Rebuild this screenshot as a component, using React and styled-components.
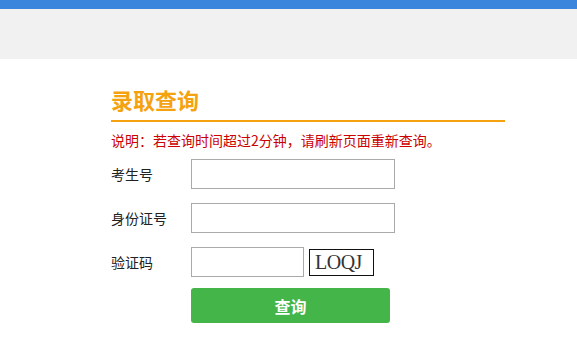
import React from 'react';
import styled, { createGlobalStyle } from 'styled-components';

const GlobalStyle = createGlobalStyle`
  html, body {
    margin: 0;
    padding: 0;
    background: #fff;
    font-family: "Noto Sans CJK SC", "Noto Sans", sans-serif;
  }
`;

const TopBar = styled.div`
  height: 9px;
  background-color: #3c85dd;
`;

const Banner = styled.div`
  height: 50px;
  background-color: #f1f1f1;
`;

const Main = styled.div`
  width: 394px;
  margin-left: 111px;
  padding-top: 25px;
`;

const Title = styled.h2`
  margin: 0;
  padding-bottom: 6px;
  font-size: 22px;
  line-height: 30px;
  font-weight: bold;
  color: #f5a20f;
  border-bottom: 2px solid #f5a20f;
`;

const Notice = styled.p`
  margin: 8px 0 9px;
  font-size: 14px;
  line-height: 20px;
  color: #cc0000;
  white-space: nowrap;
`;

const Form = styled.form`
  display: flex;
  flex-direction: column;
  gap: 14px;
`;

const Row = styled.div`
  display: flex;
  align-items: center;
  gap: 4px;
`;

const Label = styled.label`
  width: 76px;
  font-size: 14px;
  color: #222;
`;

const Input = styled.input`
  box-sizing: border-box;
  width: ${(p) => p.$width}px;
  height: 30px;
  margin: 0;
  padding: 0 4px;
  border: 1px solid #aaaaaa;
  background: #fff;
  outline: none;
`;

const Captcha = styled.div`
  box-sizing: border-box;
  width: 65px;
  height: 27px;
  margin-left: 1px;
  border: 1px solid #111;
  padding-left: 5px;
  font-family: "Liberation Serif", serif;
  font-size: 20px;
  line-height: 25px;
  color: #333;
  letter-spacing: -0.5px;
`;

const Submit = styled.button`
  width: 199px;
  height: 35px;
  margin: -3px 0 0 80px;
  border: none;
  border-radius: 3px;
  background-color: #44b549;
  color: #fff;
  font-family: "Noto Sans CJK SC", sans-serif;
  font-size: 16px;
  font-weight: bold;
  cursor: pointer;
`;

const App = () => {
    return (
        <>
            <GlobalStyle />
            <TopBar />
            <Banner />
            <Main>
                <Title>录取查询</Title>
                <Notice>说明：若查询时间超过2分钟，请刷新页面重新查询。</Notice>
                <Form onSubmit={(e) => e.preventDefault()}>
                    <Row>
                        <Label>考生号</Label>
                        <Input $width={204} />
                    </Row>
                    <Row>
                        <Label>身份证号</Label>
                        <Input $width={204} />
                    </Row>
                    <Row>
                        <Label>验证码</Label>
                        <Input $width={113} />
                        <Captcha>LOQJ</Captcha>
                    </Row>
                    <Submit type="submit">查询</Submit>
                </Form>
            </Main>
        </>
    );
};

export default App;
